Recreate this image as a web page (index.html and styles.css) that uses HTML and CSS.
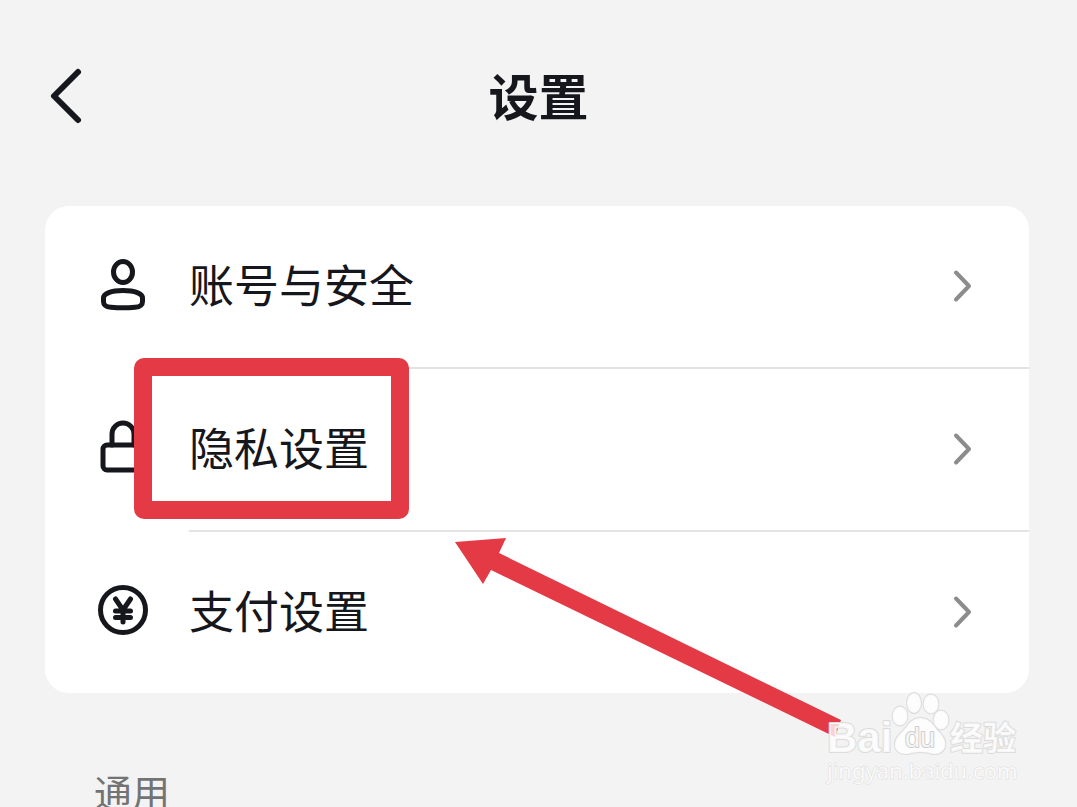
FILE: index.html
```html
<!DOCTYPE html>
<html lang="zh-CN">
<head>
    <meta charset="UTF-8">
    <meta name="viewport" content="width=device-width, initial-scale=1.0">
    <title>设置</title>
    <link rel="stylesheet" href="styles.css">
</head>
<body>
    <div class="page">
        <header class="topbar">
            <button type="button" class="back" aria-label="返回">
                <svg width="36" height="60" viewBox="0 0 36 60"><path d="M31 6 L7 30 L31 54"/></svg>
            </button>
            <h1>设置</h1>
        </header>

        <main>
            <ul class="card">
                <li>
                    <a href="#account" class="row">
                        <svg class="icon" width="56" height="56" viewBox="0 0 56 56">
                            <ellipse cx="28" cy="14" rx="9.500" ry="10.500"/>
                            <path d="M28 32.500 C40 32.500 47.500 35.500 47.500 40 V43.500 C47.500 47.500 45 48.800 40 49.300 Q28 50.400 16 49.300 C11 48.800 8.500 47.500 8.500 43.500 V40 C8.500 35.500 16 32.500 28 32.500 Z"/>
                        </svg>
                        <span class="label">账号与安全</span>
                        <svg class="chevron" width="24" height="36" viewBox="0 0 24 36"><path d="M5 4.500 L18 18 L5 31.500"/></svg>
                    </a>
                </li>
                <li>
                    <a href="#privacy" class="row">
                        <svg class="icon" width="56" height="56" viewBox="0 0 56 56">
                            <path d="M17 24 V13 A11 11 0 0 1 39 13 V24"/>
                            <rect x="8" y="24" width="40" height="25" rx="4"/>
                        </svg>
                        <span class="label">隐私设置</span>
                        <svg class="chevron" width="24" height="36" viewBox="0 0 24 36"><path d="M5 4.500 L18 18 L5 31.500"/></svg>
                    </a>
                    <div class="highlight"></div>
                </li>
                <li>
                    <a href="#payment" class="row">
                        <svg class="icon" width="56" height="56" viewBox="0 0 56 56">
                            <circle cx="28" cy="26" r="22.500"/>
                            <path d="M20.500 15 L28 26 L35.500 15 M28 26 V38 M20.500 27 H35.500 M20.500 33.500 H35.500"/>
                        </svg>
                        <span class="label">支付设置</span>
                        <svg class="chevron" width="24" height="36" viewBox="0 0 24 36"><path d="M5 4.500 L18 18 L5 31.500"/></svg>
                    </a>
                </li>
            </ul>
            <h2>通用</h2>
        </main>

        <svg class="arrow" width="390" height="204" viewBox="0 0 390 204">
            <path d="M0 5 L51 1 L44 16 L386 183 L380 200 L36 33 L28 47 Z"/>
        </svg>

        <svg class="watermark" width="200" height="96" viewBox="0 0 200 96">
            <text class="wm-bai" x="3" y="62">Bai</text>
            <g class="wm-paw">
                <ellipse cx="76" cy="26" rx="7.500" ry="9.500"/>
                <ellipse cx="90" cy="13" rx="7" ry="10"/>
                <ellipse cx="107" cy="14" rx="7.500" ry="9.500"/>
                <ellipse cx="117" cy="30" rx="7.500" ry="9.500"/>
                <path d="M96 28 C107 28 110 37 116 43 C126 53 121 65 109 64 Q96 60 84 64 C70 65 67 53 76 44 C83 38 86 28 96 28 Z"/>
            </g>
            <text class="wm-du" x="81" y="57">du</text>
            <text class="wm-cn" x="126" y="60">经验</text>
            <text class="wm-url" x="3" y="89">jingyan.baidu.com</text>
        </svg>
    </div>
</body>
</html>
```
FILE: styles.css
```css
*{
    box-sizing: border-box;
}

body{
    margin: 0;
    background-color: #f3f3f3;
    color: #16171c;
    font-family: "Noto Sans CJK SC", sans-serif;
}

.page{
    position: relative;
    height: 100vh;
    overflow: hidden;
}

svg{
    display: block;
    overflow: visible;
    fill: none;
    stroke-linecap: round;
    stroke-linejoin: round;
}

.topbar{
    display: grid;
    grid-template-columns: 60px 1fr 60px;
    align-items: center;
    padding: 60px 47px 74px;
}
.topbar h1{
    margin: 0;
    padding-bottom: 4px;
    font-size: 50px;
    line-height: 68px;
    text-align: center;
}
.back{
    justify-self: start;
    border: none;
    background: none;
    padding: 0;
    cursor: pointer;
}
.back svg{
    stroke: #16171c;
    stroke-width: 6px;
}

.card{
    list-style: none;
    margin: 0 48px 0 45px;
    padding: 0;
    background-color: white;
    border-radius: 24px;
}
.card li{
    position: relative;
}
.card li + li::before{
    content: "";
    display: block;
    height: 2px;
    margin-left: 144px;
    background-color: #e3e3e3;
}

.row{
    display: flex;
    align-items: center;
    padding: 47px 54px 48px 50px;
    color: inherit;
    text-decoration: none;
}
.icon{
    stroke: #16171c;
    stroke-width: 5px;
}
.label{
    flex: 1;
    margin-left: 38px;
    padding-bottom: 4px;
    font-size: 45px;
    line-height: 62px;
}
.chevron{
    stroke: #8c8c8c;
    stroke-width: 4px;
}

.highlight{
    position: absolute;
    top: -9px;
    left: 89px;
    width: 275px;
    height: 161px;
    border: 18px solid #e33a46;
    border-radius: 10px;
    pointer-events: none;
}

h2{
    margin: 70px 94px 0;
    color: #737373;
    font-size: 38px;
    font-weight: normal;
    line-height: 56px;
}

.arrow{
    position: absolute;
    top: 537px;
    left: 455px;
    fill: #e33a46;
}

.watermark{
    position: absolute;
    right: 53px;
    bottom: 21px;
    fill: rgba(255, 255, 255, 0.8);
    stroke: #dcdcdc;
    stroke-width: 2px;
    paint-order: stroke;
    font-family: "Liberation Sans", "Noto Sans CJK SC", sans-serif;
}
.wm-bai{
    font-size: 42px;
    font-weight: bold;
}
.wm-du{
    font-size: 27px;
    stroke: #cfcfcf;
}
.wm-cn{
    font-size: 33px;
    font-weight: bold;
}
.wm-url{
    font-family: "Noto Sans", sans-serif;
    font-size: 22px;
    stroke-width: 1px;
}
```
